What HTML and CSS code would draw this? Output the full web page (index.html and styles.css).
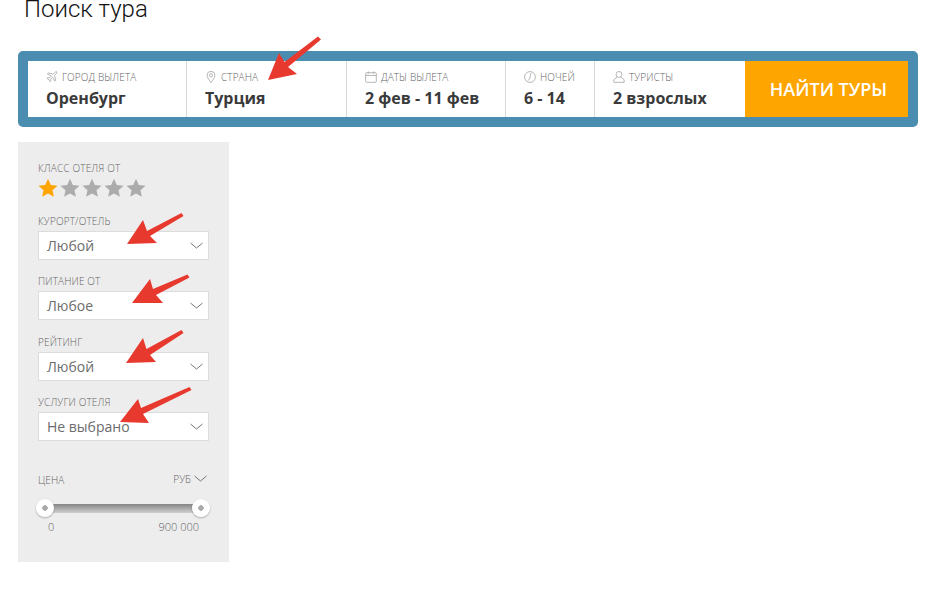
FILE: index.html
```html
<!DOCTYPE html>
<html lang="ru">
<head>
<meta charset="utf-8">
<title>Поиск тура</title>
<link rel="stylesheet" href="styles.css">
</head>
<body>
<div class="page">
  <h1 class="title">Поиск тура</h1>
  <div class="search">
    <div class="cell cell-city">
      <div class="cell-label">
        <svg class="ico" viewBox="0 0 14 14"><path d="M12.600 1.200c-.7-.5-1.700-.1-2.400.6L8.400 3.600 2.600 2.200 1.600 3.200l4.500 2.700L4 8.100 2 7.800l-.9.8 2.300 1.500 1.500 2.300.8-.9-.3-2 2.200-2.100 2.700 4.500 1-1-1.400-5.800 1.800-1.800c.7-.7 1.100-1.700.6-2.400z"/></svg>
        <span>ГОРОД ВЫЛЕТА</span>
      </div>
      <div class="cell-value">Оренбург</div>
    </div>
    <div class="cell cell-country">
      <div class="cell-label">
        <svg class="ico" viewBox="0 0 14 14"><path d="M7 13.500C5 10.500 2.400 7.700 2.400 5a4.600 4.600 0 0 1 9.200 0C11.600 7.700 9 10.500 7 13.500z"/><circle cx="7" cy="5" r="1.800"/></svg>
        <span>СТРАНА</span>
      </div>
      <div class="cell-value">Турция</div>
    </div>
    <div class="cell cell-dates">
      <div class="cell-label">
        <svg class="ico" viewBox="0 0 14 14"><rect x=".8" y="2" width="12.400" height="11.200" rx="1"/><path d="M.8 5.200h12.400M3.800.5v2.800M10.200.5v2.800"/></svg>
        <span>ДАТЫ ВЫЛЕТА</span>
      </div>
      <div class="cell-value">2 фев - 11 фев</div>
    </div>
    <div class="cell cell-nights">
      <div class="cell-label">
        <svg class="ico" viewBox="0 0 14 14"><circle cx="7" cy="7" r="6.300"/><path d="M8 2.500 7 8 5 11"/></svg>
        <span>НОЧЕЙ</span>
      </div>
      <div class="cell-value">6 - 14</div>
    </div>
    <div class="cell cell-people">
      <div class="cell-label">
        <svg class="ico" viewBox="0 0 14 14"><circle cx="7" cy="4" r="3.400"/><path d="M5 7 1 10.200v3h12v-3L9 7"/></svg>
        <span>ТУРИСТЫ</span>
      </div>
      <div class="cell-value">2 взрослых</div>
    </div>
    <button class="find" type="button">НАЙТИ ТУРЫ</button>
  </div>

  <aside class="filters">
    <div class="stars-block">
      <div class="f-label">КЛАСС ОТЕЛЯ ОТ</div>
      <div class="stars">
        <svg class="star star-on" viewBox="0 0 20 20"><path d="M10 .8l2.800 6.200 6.700.7-5 4.500 1.400 6.600L10 15.400l-5.900 3.400 1.400-6.600-5-4.500 6.700-.7z"/></svg>
        <svg class="star" viewBox="0 0 20 20"><path d="M10 .8l2.800 6.200 6.700.7-5 4.500 1.400 6.600L10 15.400l-5.900 3.400 1.400-6.600-5-4.500 6.700-.7z"/></svg>
        <svg class="star" viewBox="0 0 20 20"><path d="M10 .8l2.800 6.200 6.700.7-5 4.500 1.400 6.600L10 15.400l-5.900 3.400 1.400-6.600-5-4.500 6.700-.7z"/></svg>
        <svg class="star" viewBox="0 0 20 20"><path d="M10 .8l2.800 6.200 6.700.7-5 4.500 1.400 6.600L10 15.400l-5.900 3.400 1.400-6.600-5-4.500 6.700-.7z"/></svg>
        <svg class="star" viewBox="0 0 20 20"><path d="M10 .8l2.800 6.200 6.700.7-5 4.500 1.400 6.600L10 15.400l-5.900 3.400 1.400-6.600-5-4.500 6.700-.7z"/></svg>
      </div>
    </div>
    <div class="field">
      <div class="f-label">КУРОРТ/ОТЕЛЬ</div>
      <div class="select"><span>Любой</span><svg class="chev" viewBox="0 0 13 7"><path d="M.5 1 6.500 6 12.500 1"/></svg></div>
    </div>
    <div class="field">
      <div class="f-label">ПИТАНИЕ ОТ</div>
      <div class="select"><span>Любое</span><svg class="chev" viewBox="0 0 13 7"><path d="M.5 1 6.500 6 12.500 1"/></svg></div>
    </div>
    <div class="field">
      <div class="f-label">РЕЙТИНГ</div>
      <div class="select"><span>Любой</span><svg class="chev" viewBox="0 0 13 7"><path d="M.5 1 6.500 6 12.500 1"/></svg></div>
    </div>
    <div class="field">
      <div class="f-label">УСЛУГИ ОТЕЛЯ</div>
      <div class="select"><span>Не выбрано</span><svg class="chev" viewBox="0 0 13 7"><path d="M.5 1 6.500 6 12.500 1"/></svg></div>
    </div>
    <div class="price-head">
      <span class="f-label price-label">ЦЕНА</span>
      <span class="currency">РУБ<svg class="chev" viewBox="0 0 13 7"><path d="M.5 1 6.500 6 12.500 1"/></svg></span>
    </div>
    <div class="slider">
      <span class="knob"></span>
      <span class="knob"></span>
    </div>
    <div class="range"><span>0</span><span>900 000</span></div>
  </aside>

  <svg class="arrows" viewBox="0 0 928 613" width="928" height="613">
    <path d="M268 80 279 53 284.500 62 318 36.500 321 39.500 288 67 297 74z"/>
    <path d="M127 244 143 220 147 231 181.500 213 183.500 216 150 236 157 243z"/>
    <path d="M132 303 150 279 153 289 187.500 274.500 189.500 277.500 156 295 163 303z"/>
    <path d="M126 363 143 338 146.500 349 181.500 330 183.500 333 150 355 156 362z"/>
    <path d="M120 422 138 399 141 408 189.500 387 191.500 390 143 414 149 423z"/>
  </svg>
</div>
</body>
</html>
```
FILE: styles.css
```css
* { box-sizing: border-box; }
html, body { margin: 0; padding: 0; background: #fff; }
body { font-family: "Open Sans", "Liberation Sans", sans-serif; color: #333; }
.page { position: relative; width: 928px; height: 613px; overflow: hidden; padding: 0 10px 0 18px; }

.title { margin: 0 0 0 6px; height: 51px; font: 300 24px/19px Roboto, sans-serif; color: #111; }

.search { display: flex; width: 900px; height: 76px; border: 10px solid #4a8db0; border-radius: 5px; background: #fff; }
.cell { padding: 9px 0 0 18px; border-right: 1px solid #d9d9d9; height: 56px; }
.cell-city { width: 159px; }
.cell-country { width: 160px; }
.cell-dates { width: 159px; }
.cell-nights { width: 89px; }
.cell-people { width: 150px; border-right: 0; }
.cell-label { display: flex; align-items: center; gap: 4px; height: 14px; font-size: 10px; font-weight: 300; letter-spacing: .1px; line-height: 14px; color: #666; }
.ico { width: 12px; height: 12px; flex: none; fill: none; stroke: #aaa; stroke-width: 1; }
.cell-value { margin-top: 3px; font-size: 16px; line-height: 22px; font-weight: 700; color: #3a3a3a; white-space: nowrap; }
.find { width: 163px; height: 56px; border: 0; padding: 0 0 0 4px; background: #ffa500; color: #fff; font: 600 18px "Open Sans", sans-serif; }

.filters { width: 211px; height: 420px; margin-top: 15px; padding: 19px 20px 0; background: #ededed; }
.f-label { font-size: 10px; font-weight: 300; letter-spacing: .15px; line-height: 14px; color: #666; }
.stars-block { height: 53px; }
.stars { display: flex; gap: 2px; margin-top: 3px; }
.star { width: 20px; height: 20px; fill: #acacac; }
.star-on { fill: #ffa500; }
.field { height: 60.4px; }
.f-label + .select { margin-top: 3px; }
.select { display: flex; align-items: center; justify-content: space-between; width: 171px; height: 29px; padding: 0 5px 0 8px; background: #fff; border: 1px solid #dcdcdc; font-size: 14px; color: #6c6c6c; }
.chev { width: 13px; height: 7px; fill: none; stroke: #777; stroke-width: 1; }
.price-head { display: flex; justify-content: space-between; align-items: flex-start; width: 169px; height: 16px; margin-top: 16px; }
.price-label { padding-top: 1px; }
.currency { display: flex; align-items: center; gap: 3px; font-size: 10px; font-weight: 300; line-height: 14px; color: #666; }
.slider { position: relative; display: flex; justify-content: space-between; align-items: center; width: 172px; height: 9px; margin: 16px 0 0 -1px; background: linear-gradient(#858585, #d0d0d0); border-radius: 4px; }
.knob { width: 18px; height: 18px; margin: 0 -1px; border-radius: 50%; background: radial-gradient(circle, #aaa 0 2.500px, #fff 3px); box-shadow: 0 1px 2px rgba(0,0,0,.3); }
.range { display: flex; justify-content: space-between; width: 151px; margin: 7px 0 0 10px; font-size: 11px; font-weight: 300; line-height: 14px; color: #666; }

.arrows { position: absolute; left: 0; top: 0; pointer-events: none; fill: #e8392e; }
```
